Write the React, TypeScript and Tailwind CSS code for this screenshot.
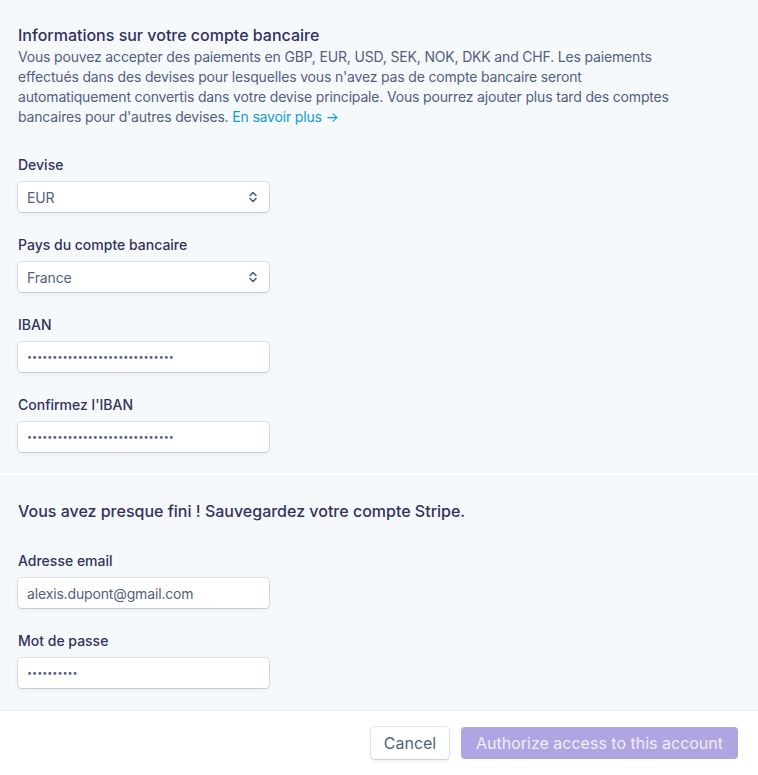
import React from 'react';

const font = { fontFamily: 'Inter, "Noto Sans", sans-serif' };

function UpDown() {
  return (
    <svg width="10" height="14" viewBox="0 0 10 14" fill="none" className="text-[#525f7f]">
      <path d="M2 5.5 L5 2.5 L8 5.5" stroke="currentColor" strokeWidth="1.6" strokeLinecap="round" strokeLinejoin="round" />
      <path d="M2 8.5 L5 11.5 L8 8.5" stroke="currentColor" strokeWidth="1.6" strokeLinecap="round" strokeLinejoin="round" />
    </svg>
  );
}

const boxClass =
  'flex items-center w-[251px] h-[30px] rounded-[4px] bg-white pl-[9px] pr-[11px] text-[14px] tracking-[-0.15px] text-[#525f7f] shadow-[0_0_0_1px_rgba(50,50,93,0.12),0_2px_4px_rgba(50,50,93,0.08),0_1px_1px_rgba(0,0,0,0.06)]';

function Field({ label, children }: { label: string; children: React.ReactNode }) {
  return (
    <div className="flex flex-col">
      <label className="text-[14px] leading-[20px] font-medium text-[#32325d]">{label}</label>
      <div className="mt-[7px]">{children}</div>
    </div>
  );
}

function SelectBox({ value }: { value: string }) {
  return (
    <div className={boxClass + ' justify-between'}>
      <span>{value}</span>
      <UpDown />
    </div>
  );
}

function Dots({ count }: { count: number }) {
  return (
    <div className={boxClass}>
      <span className="text-[9px] tracking-[0px] text-[#525f7f]">{'•'.repeat(count)}</span>
    </div>
  );
}

export default function App() {
  return (
    <div className="w-[758px] h-[775px] bg-white flex flex-col" style={font}>
      <section className="bg-[#f6f9fc] pl-[18px] pr-[20px] pt-[24px] pb-[21px]">
        <h2 className="text-[16px] leading-[23px] font-medium text-[#32325d]">
          Informations sur votre compte bancaire
        </h2>
        <p className="text-[14px] leading-[20px] tracking-[-0.17px] text-[#525f7f] w-[665px]">
          Vous pouvez accepter des paiements en GBP, EUR, USD, SEK, NOK, DKK and CHF. Les paiements effectués dans des devises pour lesquelles vous n'avez pas de compte bancaire seront automatiquement convertis dans votre devise principale. Vous pourrez ajouter plus tard des comptes bancaires pour d'autres devises.{' '}
          <a className="text-[#0f9bd7]" href="#">En savoir plus →</a>
        </p>

        <div className="mt-[28px] flex flex-col gap-[23px]">
          <Field label="Devise"><SelectBox value="EUR" /></Field>
          <Field label="Pays du compte bancaire"><SelectBox value="France" /></Field>
          <Field label="IBAN"><Dots count={29} /></Field>
          <Field label="Confirmez l'IBAN"><Dots count={29} /></Field>
        </div>
      </section>

      <div className="h-[2px] bg-white" />

      <section className="bg-[#f6f9fc] pl-[18px] pt-[26px] pb-[22px] border-b border-[#e6ebf1]">
        <h3 className="text-[16px] leading-[20px] font-medium text-[#32325d]">
          Vous avez presque fini ! Sauvegardez votre compte Stripe.
        </h3>
        <div className="mt-[30px] flex flex-col gap-[23px]">
          <Field label="Adresse email">
            <div className={boxClass}>alexis.dupont@gmail.com</div>
          </Field>
          <Field label="Mot de passe"><Dots count={10} /></Field>
        </div>
      </section>

      <div className="flex justify-end gap-[12px] pt-[16px] pr-[20px]">
        <button className="h-[32px] w-[78px] rounded-[4px] bg-white text-[16px] text-[#525f7f] shadow-[0_0_0_1px_rgba(50,50,93,0.12),0_2px_4px_rgba(50,50,93,0.08),0_1px_1px_rgba(0,0,0,0.06)]">
          Cancel
        </button>
        <button className="h-[32px] w-[277px] rounded-[4px] bg-[#b0a5e3] text-[16px] text-[#f1eefb]">
          Authorize access to this account
        </button>
      </div>
    </div>
  );
}
